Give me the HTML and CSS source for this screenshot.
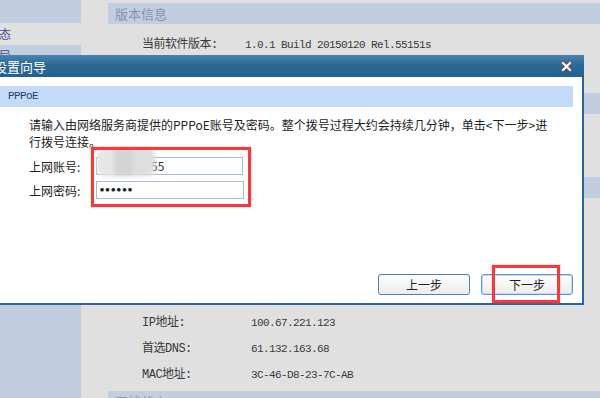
FILE: index.html
```html
<!DOCTYPE html>
<html lang="zh-CN">
<head>
    <meta charset="UTF-8">
    <title>设置向导</title>
    <link rel="stylesheet" href="styles.css">
</head>
<body>
    <div class="page">
        <aside class="sidebar">
            <div class="nav-top"></div>
            <div class="nav-item plain">运行状态</div>
            <div class="nav-item">设置向导</div>
            <div class="nav-item">网络参数</div>
            <div class="nav-item">无线设置</div>
        </aside>

        <main class="content">
            <section class="section section-ver">
                <div class="section-head">版本信息</div>
                <div class="rows">
                    <div class="row"><span class="label">当前软件版本:</span><span class="value">1.0.1 Build 20150120 Rel.55151s</span></div>
                    <div class="row"><span class="label">当前硬件版本:</span><span class="value">WR842N v3 00000000</span></div>
                </div>
            </section>
            <section class="section">
                <div class="section-head">LAN口状态</div>
                <div class="rows">
                    <div class="row"><span class="label">MAC地址:</span><span class="value">3C-46-D8-23-7C-AA</span></div>
                    <div class="row"><span class="label">IP地址:</span><span class="value">192.168.1.1</span></div>
                </div>
            </section>
            <section class="section">
                <div class="section-head">WAN口状态</div>
                <div class="rows">
                    <div class="row"><span class="label">连接类型:</span><span class="value">PPPoE</span></div>
                    <div class="row"><span class="label">连接状态:</span><span class="value">已连接</span></div>
                    <div class="row"><span class="label">子网掩码:</span><span class="value">255.255.255.255</span></div>
                    <div class="row"><span class="label">网关:</span><span class="value">100.67.0.1</span></div>
                    <div class="row"><span class="label">IP地址:</span><span class="value">&nbsp;100.67.221.123</span></div>
                    <div class="row"><span class="label">首选DNS:</span><span class="value">&nbsp;61.132.163.68</span></div>
                    <div class="row"><span class="label">MAC地址:</span><span class="value">&nbsp;3C-46-D8-23-7C-AB</span></div>
                </div>
            </section>
            <section class="section">
                <div class="section-head">无线状态</div>
            </section>
        </main>
    </div>

    <div class="dialog">
        <div class="dialog-title">
            <span>设置向导</span>
            <svg class="close" width="11" height="11" viewBox="0 0 11 11">
                <path d="M2 2 L9 9 M9 2 L2 9" stroke="#555" stroke-width="4" stroke-linecap="square"/>
                <path d="M2 2 L9 9 M9 2 L2 9" stroke="#fff" stroke-width="2.2" stroke-linecap="square"/>
            </svg>
        </div>
        <div class="dialog-body">
            <div class="bar">PPPoE</div>
            <p class="intro">请输入由网络服务商提供的PPPoE账号及密码。整个拨号过程大约会持续几分钟，单击&lt;下一步&gt;进<br>行拨号连接。</p>
            <div class="form">
                <div class="field">
                    <label>上网账号:</label>
                    <div class="input"><span class="hidden-part"></span>55</div>
                </div>
                <div class="field">
                    <label>上网密码:</label>
                    <div class="input dots">●●●●●●</div>
                </div>
                <div class="mosaic"></div>
            </div>
            <div class="actions">
                <button class="btn">上一步</button>
                <button class="btn focused">下一步</button>
            </div>
        </div>
        <div class="mark mark-form"></div>
        <div class="mark mark-next"></div>
    </div>
</body>
</html>
```

FILE: styles.css
```css
html, body { margin: 0; height: 398px; overflow: hidden; }
body { background: #e0e0e0; font-family: "Noto Sans CJK SC", "Liberation Sans", sans-serif; font-size: 12px; color: #333; position: relative; }

.page { display: flex; margin-left: -50px; }
.sidebar { width: 131px; min-height: 398px; background: #c3cde0; flex-shrink: 0; }
.nav-top { height: 23px; }
.nav-item { height: 22px; line-height: 22px; padding-left: 13px; font-size: 12px; color: #4b4a8e; }
.nav-item.plain { background: #e0e0e0; }

.content { flex: 1; padding: 3px 0 0 27px; }
.section-head { height: 21px; line-height: 21px; background: #c3cde0; padding-left: 7px; font-size: 13px; color: #8792ac; }
.rows { padding: 8px 0 3px 34px; }
.section-ver .rows { padding-bottom: 9px; }
.row { height: 26px; line-height: 26px; display: flex; }
.label { width: 103px; font-family: "Liberation Mono", "Noto Sans CJK SC", monospace; font-size: 12px; color: #3a3a3a; letter-spacing: -0.5px; }
.value { font-family: "Liberation Mono", "Noto Sans CJK SC", monospace; font-size: 11px; letter-spacing: -0.6px; color: #3a3a3a; }

.dialog { position: absolute; left: -11px; top: 55px; width: 595px; }
.dialog-title { height: 22px; display: flex; align-items: center; justify-content: space-between; padding: 0 12px 0 5px; background: linear-gradient(#4a83ac, #2e6996 45%, #23608e); color: #fff; font-size: 13px; }
.close { display: block; }
.dialog-body { background: #fff; border: 2px solid #2b6694; border-top: 0; padding: 9px 9px 8px 9px; height: 209px; display: flex; flex-direction: column; }
.bar { height: 21px; line-height: 21px; background: #c5d9f8; padding-left: 17px; margin-left: -9px; font-family: "Liberation Mono", monospace; font-size: 11px; letter-spacing: -0.6px; color: #1d3e72; }
.intro { margin: 9px 0 0 29px; white-space: nowrap; line-height: 17px; color: #222; }

.form { position: relative; margin: 7px 0 0 29px; display: flex; flex-direction: column; gap: 6px; }
.field { display: flex; align-items: center; height: 18px; }
.field label { width: 67px; color: #222; }
.input { width: 143px; height: 16px; border: 1px solid #a8bbd2; line-height: 16px; padding-left: 2px; color: #333; font-size: 12px; display: flex; }
.hidden-part { width: 52px; }
.dots { font-size: 4px; letter-spacing: 1.6px; padding-left: 3px; color: #222; align-items: center; }
.mosaic { position: absolute; left: 68px; top: -9px; width: 58px; height: 28px; border-radius: 7px; background: linear-gradient(90deg, #e6e6e6 0 30%, #d4d4d4 30% 62%, #dedede 62%); filter: blur(2px); }

.actions { margin-top: auto; display: flex; justify-content: flex-end; gap: 11px; }
.btn { width: 92px; height: 21px; border: 1px solid #5a7ca3; border-radius: 3px; background: linear-gradient(#fefefe, #ececec); font-family: inherit; font-size: 12px; color: #222; padding: 0; }
.btn.focused { border-color: #5b93dc; box-shadow: inset 0 0 0 1px #c3dbf7; }

.mark { position: absolute; border: 3px solid #f23b3b; box-shadow: 0 0 1px #f55; }
.mark-form { left: 102px; top: 92px; width: 154px; height: 54px; }
.mark-next { left: 503px; top: 210px; width: 62px; height: 32px; }
```
